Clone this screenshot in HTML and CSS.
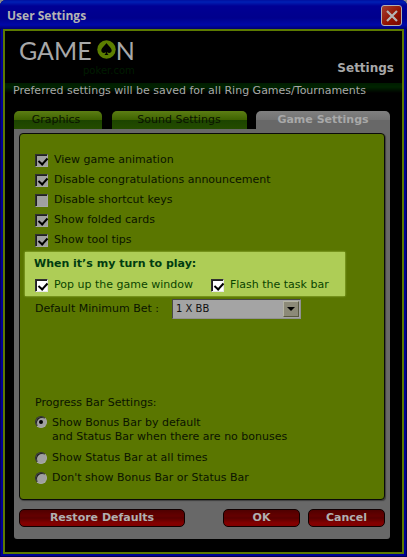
FILE: index.html
```html
<!DOCTYPE html>
<html lang="en">
<head>
    <meta charset="UTF-8">
    <meta name="viewport" content="width=device-width, initial-scale=1.0">
    <title>User Settings</title>
    <link rel="stylesheet" href="styles.css">
</head>
<body>
    <div class="window">
        <div class="titlebar">
            <h1>User Settings</h1>
            <button class="close" type="button" aria-label="Close">
                <svg width="12" height="12" viewBox="0 0 12 12"><path d="M1 1 11 11M11 1 1 11" stroke="#b4b4b4" stroke-width="2.2"/></svg>
            </button>
        </div>

        <main class="client">
            <header class="header">
                <div class="brand">
                    <div class="logo">
                        <span>GAME</span>
                        <svg width="19" height="19" viewBox="0 0 19 19">
                            <circle cx="9.5" cy="9.5" r="9.2" fill="#5c7e00"/>
                            <path d="M9.5 3C8.6 5 4.3 7.7 4.3 10.6c0 2.5 3.2 3.2 4.6 1.4-.1 1.4-.5 2.3-1.6 3h4.400c-1.100-.7-1.500-1.600-1.600-3 1.400 1.800 4.600 1.100 4.600-1.400C14.700 7.700 10.400 5 9.500 3z" fill="#000"/>
                        </svg>
                        <span>N</span>
                    </div>
                    <div class="tagline">poker.com</div>
                </div>
                <h2>Settings</h2>
            </header>
            <p class="notice">Preferred settings will be saved for all Ring Games/Tournaments</p>

            <nav class="tabs">
                <button type="button" class="tab graphics">Graphics</button>
                <button type="button" class="tab sound">Sound Settings</button>
                <button type="button" class="tab game active">Game Settings</button>
            </nav>

            <form class="panel">
                <div class="content">
                    <label class="option"><input type="checkbox" checked> View game animation</label>
                    <label class="option"><input type="checkbox" checked> Disable congratulations announcement</label>
                    <label class="option"><input type="checkbox"> Disable shortcut keys</label>
                    <label class="option"><input type="checkbox" checked> Show folded cards</label>
                    <label class="option"><input type="checkbox" checked> Show tool tips</label>

                    <fieldset class="turn">
                        <legend>When it’s my turn to play:</legend>
                        <div class="turn-options">
                            <label class="option"><input type="checkbox" checked> Pop up the game window</label>
                            <label class="option"><input type="checkbox" checked> Flash the task bar</label>
                        </div>
                    </fieldset>

                    <div class="bet">
                        <label for="minBet">Default Minimum Bet :</label>
                        <div class="select">
                            <select id="minBet">
                                <option>1 X BB</option>
                            </select>
                            <span class="arrow"></span>
                        </div>
                    </div>

                    <fieldset class="progress">
                        <legend>Progress Bar Settings:</legend>
                        <label class="option two-line"><input type="radio" name="bar" checked> <span>Show Bonus Bar by default<br>and Status Bar when there are no bonuses</span></label>
                        <label class="option"><input type="radio" name="bar"> Show Status Bar at all times</label>
                        <label class="option"><input type="radio" name="bar"> Don't show Bonus Bar or Status Bar</label>
                    </fieldset>
                </div>

                <div class="buttons">
                    <button type="button" class="btn restore">Restore Defaults</button>
                    <button type="button" class="btn">OK</button>
                    <button type="button" class="btn">Cancel</button>
                </div>
            </form>
        </main>
    </div>
</body>
</html>
```
FILE: styles.css
```css
* {
    box-sizing: border-box;
}

body {
    margin: 0;
    background: #8a8a8a;
    font-family: Verdana, "DejaVu Sans", sans-serif;
    font-size: 11px;
    line-height: 14px;
    color: #0a1400;
}

button, select {
    font: inherit;
}

h1, h2, p, fieldset, legend {
    margin: 0;
    padding: 0;
    border: 0;
}

.window {
    display: flex;
    flex-direction: column;
    min-height: 100vh;
    padding: 0 3px 3px;
    background: #000096;
    border-radius: 6px 6px 0 0;
    box-shadow: inset 1px 0 #000060, inset -1px -1px #000050;
}

/* title bar */
.titlebar {
    display: flex;
    align-items: center;
    justify-content: space-between;
    height: 29px;
    margin: 0 -3px;
    padding: 2px 5px 0 7px;
    border-radius: 6px 6px 0 0;
    background: linear-gradient(#0010a0, #0020b4 2px, #000094 6px, #00008c 18px, #0008a8 25px, #000070);
}

.titlebar h1 {
    font-family: "Trebuchet MS", "Open Sans", sans-serif;
    font-size: 12px;
    line-height: 16px;
    color: #b4b4b4;
}

.close {
    display: flex;
    align-items: center;
    justify-content: center;
    width: 21px;
    height: 21px;
    padding: 0;
    border: 1px solid #b0b0b0;
    border-radius: 3px;
    background: linear-gradient(135deg, #a44030, #901000 60%, #780800);
}

.client {
    flex: 1;
    border: 2px solid #5c7a00;
    background: #000;
}

/* header */
.header {
    display: flex;
    justify-content: space-between;
    align-items: flex-end;
    height: 52px;
    padding: 0 8px 7px 14px;
}

.brand {
    align-self: flex-start;
    padding-top: 7px;
}

.logo {
    display: flex;
    align-items: center;
    font-family: Lato, sans-serif;
    font-size: 25px;
    line-height: 25px;
    color: #a8a8a8;
}

.logo svg {
    margin: 0 0 2px 5px;
}

.tagline {
    padding-top: 2px;
    font-size: 10px;
    line-height: 12px;
    text-align: right;
    color: #001c00;
}

.header h2 {
    font-size: 12px;
    line-height: 16px;
    color: #a8a8a8;
}

.notice {
    height: 28px;
    padding: 1px 0 0 8px;
    background: linear-gradient(#001c00, #002400 4px, #000 10px);
    color: #a8a8a8;
    white-space: nowrap;
}

/* tabs */
.tabs {
    display: flex;
    justify-content: space-between;
    padding: 0 12px 0 9px;
}

.tab {
    height: 18px;
    padding: 0;
    border: 0;
    border-radius: 5px 5px 0 0;
    background: linear-gradient(#5c7e14, #3e6200 9px, #1c4400 9px, #244c00);
    color: #0a1400;
    line-height: 16px;
}

.graphics {
    width: 88px;
    padding-right: 4px;
}

.sound {
    width: 135px;
}

.game {
    width: 134px;
}

.tab.active {
    background: linear-gradient(#808080, #727272 9px, #686868 9px);
    color: #a8a8a8;
    font-weight: bold;
}

/* settings panel */
.panel {
    margin: 0 12px 12px 9px;
    padding: 4px 5px 12px;
    border-radius: 0 0 3px 3px;
    background: #686868;
}

.content {
    padding: 16px 6px 11px 5px;
    border: 1px solid #0a0a0a;
    border-radius: 4px;
    background: #5a7600;
    box-shadow: 1px 1px 1px #404040;
}

.option {
    display: flex;
    align-items: center;
    gap: 6px;
    height: 20px;
    padding-left: 10px;
}

.option input {
    flex: none;
    appearance: none;
    width: 13px;
    height: 13px;
    margin: 0;
    border: 1px solid #a8a8a8;
    border-top-color: #303030;
    border-left-color: #303030;
    background: #a0a0a0;
    box-shadow: inset 1px 1px #202020;
}

.option input[type="checkbox"]:checked::before {
    content: "";
    display: block;
    width: 4px;
    height: 7px;
    margin: 1px 0 0 4px;
    border: solid #000;
    border-width: 0 2px 2px 0;
    transform: rotate(42deg);
}

.option input[type="radio"] {
    width: 12px;
    height: 12px;
    border-radius: 50%;
}

.option input[type="radio"]:checked::before {
    content: "";
    display: block;
    width: 4px;
    height: 4px;
    margin: 3px;
    border-radius: 50%;
    background: #000;
}

.turn {
    margin: 2px 33px 0 0;
    padding: 0 0 1px;
    background: #aecd56;
    box-shadow: 0 0 2px #aecd56;
    color: #0a4400;
}

.turn legend {
    float: left;
    width: 100%;
    padding: 5px 0 4px 9px;
    color: #003c10;
    font-weight: bold;
}

.turn-options {
    display: flex;
    clear: both;
    gap: 8px;
}

.turn .option input {
    background-color: #fff;
    border-right-color: #e8e8e8;
    border-bottom-color: #e8e8e8;
}

/* minimum bet */
.bet {
    display: flex;
    align-items: center;
    justify-content: space-between;
    margin: 3px 77px 0 10px;
}

.select {
    position: relative;
    width: 129px;
}

.select select {
    display: block;
    appearance: none;
    width: 100%;
    height: 20px;
    padding: 0 3px;
    border: 1px solid #909090;
    border-top-color: #484848;
    border-left-color: #484848;
    border-radius: 0;
    background: #a4a4a4;
    color: #101010;
    font-size: 10px;
}

.arrow {
    position: absolute;
    top: 2px;
    right: 2px;
    width: 16px;
    height: 16px;
    border: 1px solid #585840;
    border-top-color: #b4b4a4;
    border-left-color: #b4b4a4;
    background: #8c8a78;
    pointer-events: none;
}

.arrow::before {
    content: "";
    display: block;
    margin: 5px 3px;
    border: 4px solid transparent;
    border-top-color: #000;
    border-bottom: 0;
}

/* progress bar */
.progress {
    padding-top: 77px;
}

.progress legend {
    float: left;
    width: 100%;
    padding: 0 0 3px 10px;
}

.progress .option {
    clear: both;
    gap: 5px;
}

.progress .two-line {
    align-items: flex-start;
    height: 35px;
    padding-top: 3px;
}

/* bottom buttons */
.buttons {
    display: flex;
    gap: 8px;
    margin-top: 9px;
}

.btn {
    width: 77px;
    height: 18px;
    padding: 0;
    border: 1px solid #100000;
    border-radius: 5px;
    background: linear-gradient(#500000, #640000 6px, #580000 8px, #840000 13px, #800000);
    color: #b0b0b0;
    font-weight: bold;
    line-height: 16px;
}

.restore {
    width: 166px;
    margin-right: auto;
}
```
